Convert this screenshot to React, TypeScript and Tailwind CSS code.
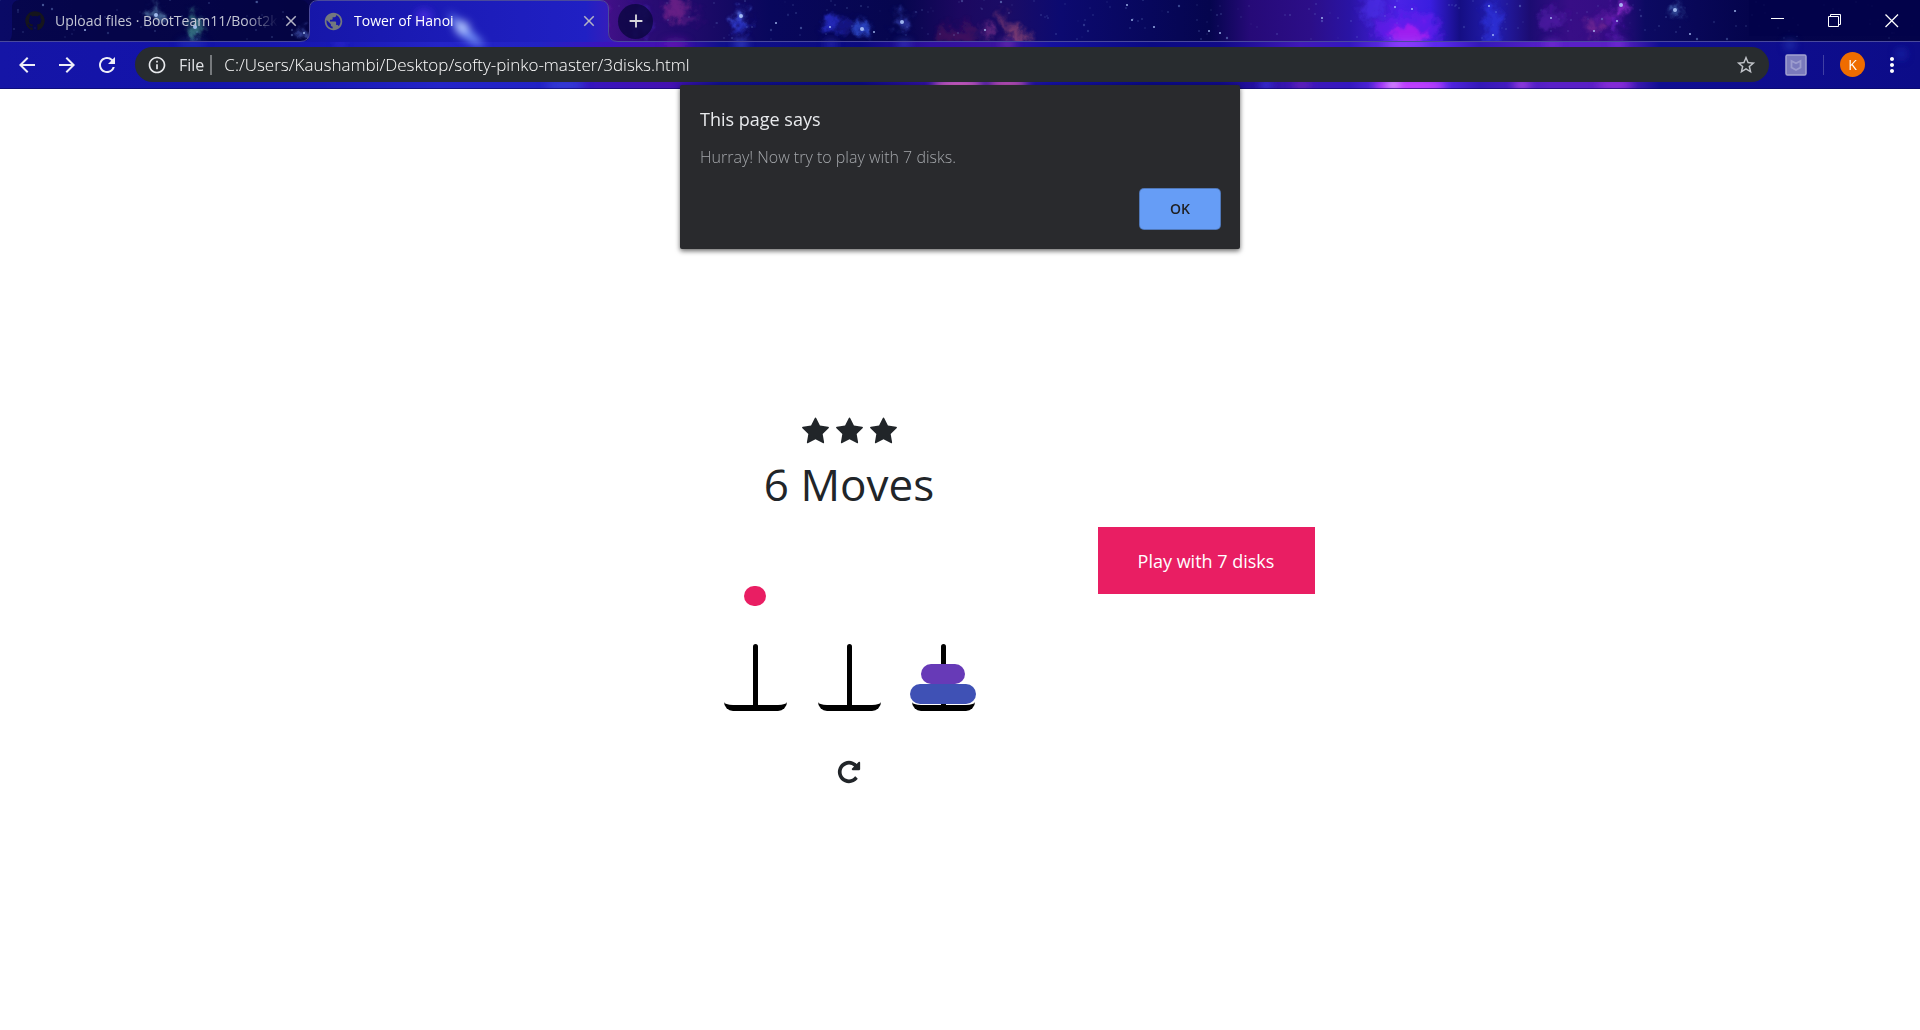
import React, { useState } from "react";
import {
  MdArrowBack,
  MdArrowForward,
  MdRefresh,
  MdInfoOutline,
  MdStarBorder,
  MdMoreVert,
  MdAdd,
  MdClose,
  MdPublic,
} from "react-icons/md";
import { FaGithub } from "react-icons/fa";

const STRIP_STOPS: [number, string][] = [
  [0, "#0a0a66"], [300, "#06064e"], [590, "#4a1290"], [650, "#2a0c74"], [710, "#1a0a66"], [770, "#08075c"],
  [900, "#06064e"], [960, "#1c0860"], [1010, "#1a0c66"], [1060, "#0c0a70"], [1150, "#07075c"], [1210, "#05054e"],
  [1250, "#260a78"], [1310, "#2c0e88"], [1350, "#2a14a4"], [1400, "#4a22e6"], [1430, "#3a1ee0"], [1460, "#150e84"],
  [1495, "#241eb0"], [1530, "#1c0c72"], [1570, "#380e86"], [1610, "#340d84"], [1645, "#0c0a62"], [1750, "#04044c"],
  [1920, "#03034a"],
];

const TOOLBAR_STOPS: [number, string][] = [
  [0, "#1515a6"], [200, "#1313aa"], [320, "#1818b4"], [440, "#2424c8"], [540, "#2222c4"], [600, "#3a14bc"],
  [670, "#4410b0"], [720, "#10108c"], [860, "#0a0a80"], [930, "#3010a0"], [1000, "#3a14a0"], [1050, "#1410a0"],
  [1150, "#0a0a84"], [1220, "#100a88"], [1300, "#4018b8"], [1350, "#3418c0"], [1400, "#7034f0"], [1440, "#5a28ec"],
  [1480, "#3418b8"], [1550, "#5a20c8"], [1620, "#5a20c4"], [1660, "#100e92"], [1920, "#0c0c88"],
];

/* x, y, rx, ry, colour, opacity */
type Cloud = [number, number, number, number, string, number];

const STRIP_CLOUDS: Cloud[] = [
  [155, 15, 5, 8, "#7db8d8", 0.6], [195, 27, 7, 11, "#54b4a4", 0.6], [303, 34, 4, 4, "#7090ff", 0.8],
  [600, 18, 7, 16, "#7a20b8", 0.5], [676, 8, 9, 16, "#a8329c", 0.5], [690, 18, 12, 5, "#8a2c9c", 0.35],
  [640, 22, 10, 16, "#4a2cd0", 0.4], [741, 22, 5, 14, "#3346e8", 0.8], [741, 16, 3, 3, "#8ab0ff", 0.9],
  [831, 25, 6, 9, "#2a34d8", 0.8], [862, 28, 6, 7, "#3a5ae8", 0.8], [846, 24, 12, 4, "#242ab8", 0.6],
  [902, 20, 7, 8, "#4050c8", 0.6], [955, 36, 22, 10, "#7a205c", 0.35], [986, 31, 3, 9, "#c850a8", 0.6],
  [1005, 20, 3, 9, "#c05878", 0.6], [1013, 30, 5, 6, "#c86078", 0.6], [1022, 36, 9, 4, "#d06878", 0.6],
  [1408, 30, 32, 18, "#6a20ee", 0.7], [1410, 36, 17, 10, "#b020f0", 0.8], [1371, 8, 10, 14, "#5030f0", 0.6],
  [1492, 26, 8, 22, "#3034e0", 0.7], [1552, 20, 12, 10, "#5a1cb0", 0.6], [1621, 6, 7, 6, "#a030d8", 0.8],
  [1610, 18, 12, 4, "#8a28c0", 0.6], [1617, 28, 3, 12, "#7a24d8", 0.8], [1594, 28, 8, 6, "#a83ca0", 0.5],
  [1676, 10, 4, 4, "#5a8ad0", 0.9],
];

const TOOLBAR_CLOUDS: Cloud[] = [
  [340, 43, 5, 4, "#4034e0", 0.7], [192, 44, 14, 4, "#3a56d0", 0.4],
  [676, 44, 12, 4, "#7a1cb0", 0.7], [741, 44, 7, 3, "#5060f0", 0.9], [831, 44, 6, 3, "#4040e0", 0.8],
  [904, 44, 7, 3, "#4050d8", 0.8], [1008, 44, 8, 3, "#9a40b8", 0.8], [1406, 44, 22, 4, "#9a40ff", 0.9],
  [1552, 44, 8, 3, "#8a34d8", 0.8], [1618, 44, 8, 3, "#8a34e0", 0.8], [958, 86, 26, 6, "#f070c8", 1],
  [1008, 85, 20, 6, "#e060b8", 0.9], [1266, 85, 6, 4, "#4040f0", 0.9],
  [1302, 85, 9, 4, "#7a24b8", 0.8], [1410, 86, 36, 7, "#c840ff", 1], [1393, 84, 5, 5, "#f0b0ff", 0.9],
  [1522, 85, 9, 5, "#b048e8", 0.9], [1615, 85, 18, 5, "#9a30e0", 0.9], [565, 85, 20, 5, "#3a4ae0", 0.8],
  [1790, 45, 5, 4, "#3050c8", 0.7], [1901, 54, 5, 5, "#2838c0", 0.6],
];

/* x, y, radius of the brighter stars */
const BRIGHT: [number, number, number][] = [
  [156, 15, 2], [195, 27, 2], [85, 30, 1], [741, 16, 2], [776, 23, 1], [862, 29, 2], [874, 32, 1], [830, 27, 1],
  [902, 22, 2], [985, 30, 1], [1154, 27, 1], [1209, 31, 1], [1132, 20, 1], [1127, 5, 1], [1220, 33, 1],
  [1489, 6, 1], [1493, 35, 1], [1551, 18, 1], [1594, 31, 1], [1617, 21, 1], [1621, 5, 2], [1675, 10, 2],
  [1735, 11, 1], [1690, 34, 1], [1395, 7, 1], [1412, 9, 1], [1322, 18, 1], [304, 33, 1],
];

const DUST = Array.from({ length: 300 }, (_, i) => ({
  x: (i * 379 + ((i * i * 17) % 211)) % 1920,
  y: (i * 23 + ((i * i * 7) % 37)) % 40,
  o: 0.1 + ((i * 13) % 10) / 25,
}));

function Clouds({ items, filter }: { items: Cloud[]; filter: string }) {
  return (
    <g filter={filter}>
      {items.map(([x, y, rx, ry, c, o], i) => (
        <ellipse key={i} cx={x} cy={y} rx={rx} ry={ry} fill={c} opacity={o} />
      ))}
    </g>
  );
}

function Galaxy() {
  return (
    <svg className="absolute inset-0 h-full w-full" viewBox="0 0 1920 89" preserveAspectRatio="xMinYMin slice" aria-hidden="true">
      <defs>
        <linearGradient id="strip">
          {STRIP_STOPS.map(([x, c]) => (
            <stop key={x} offset={x / 1920} stopColor={c} />
          ))}
        </linearGradient>
        <linearGradient id="bar">
          {TOOLBAR_STOPS.map(([x, c]) => (
            <stop key={x} offset={x / 1920} stopColor={c} />
          ))}
        </linearGradient>
        <linearGradient id="tab">
          <stop offset="0" stopColor="#1616a8" />
          <stop offset="0.5" stopColor="#1c1cb8" />
          <stop offset="0.9" stopColor="#2020c4" />
          <stop offset="1" stopColor="#3c1cb8" />
        </linearGradient>
        <filter id="soft" filterUnits="userSpaceOnUse" x="0" y="-30" width="1920" height="160">
          <feGaussianBlur stdDeviation="4" />
        </filter>
        <filter id="wisp" filterUnits="userSpaceOnUse" x="0" y="-30" width="1920" height="160">
          <feGaussianBlur stdDeviation="3" result="b" />
          <feTurbulence type="fractalNoise" baseFrequency="0.08" numOctaves="3" seed="4" result="n" />
          <feDisplacementMap in="b" in2="n" scale="22" xChannelSelector="R" yChannelSelector="G" />
        </filter>
        <clipPath id="top">
          <rect width="1920" height="41" />
        </clipPath>
      </defs>
      <rect width="1920" height="42" fill="url(#strip)" />
      <g clipPath="url(#top)">
        <path d="M8 42Q12 40 12 32V8Q12 0 20 0H300Q308 0 309 8V42Z" fill="#03033c" opacity="0.6" />
        <Clouds items={STRIP_CLOUDS} filter="url(#wisp)" />
        {DUST.map((d, i) => (
          <circle key={i} cx={d.x} cy={d.y} r={i % 9 === 0 ? 1.2 : 0.7} fill="#8fb0ee" opacity={d.o} />
        ))}
        {BRIGHT.map(([x, y, r], i) => (
          <circle key={i} cx={x} cy={y} r={r} fill="#b4ccff" opacity="0.85" />
        ))}
        <rect x="1749" width="171" height="36" fill="#03034a" opacity="0.8" />
      </g>
      <rect y="41" width="1920" height="48" fill="url(#bar)" />
      <Clouds items={TOOLBAR_CLOUDS} filter="url(#soft)" />
      <path d="M302 42Q310 41 310 33V8Q310 1 318 1H600Q608 1 608 9V33Q608 41 617 42Z" fill="url(#tab)" />
      <g filter="url(#soft)">
        <path d="M448 12L462 22L486 46L474 44L458 34Z" fill="#7c9cff" />
        <ellipse cx="424" cy="16" rx="8" ry="6" fill="#4a2ce0" />
        <ellipse cx="462" cy="27" rx="7" ry="6" fill="#b8ccff" />
      </g>
      <path
        d="M0 41.5H300Q309.500 41.500 309.500 32V9Q309.500 0.500 318 0.500H600Q608.500 0.500 608.500 9V32Q608.500 41.500 618 41.500H1920"
        fill="none"
        stroke="#4a4a9c"
      />
      <rect y="88" width="1920" height="1" fill="#0a0a60" opacity="0.6" />
    </svg>
  );
}

function Tab({ title, icon, active }: { title: string; icon: React.ReactNode; active?: boolean }) {
  return (
    <div className="flex h-full w-[298px] items-center pl-[15px] pr-2">
      {icon}
      <button
        type="button"
        role="tab"
        aria-selected={!!active}
        className={
          "ml-2.5 mr-1 min-w-0 flex-1 whitespace-nowrap text-left text-sm " +
          (active ? "text-white" : "mask-r-from-85% text-[#c4c6d4]")
        }
      >
        {title}
      </button>
      <button type="button" aria-label={"Close " + title} className="text-[#b4b4c4]">
        <MdClose size={18} />
      </button>
    </div>
  );
}

function WindowButtons() {
  return (
    <div className="ml-auto flex h-9 text-white">
      <button type="button" aria-label="Minimize" className="flex w-[57px] items-center justify-center">
        <svg width="14" height="14"><path d="M0 4.500H13" stroke="currentColor" /></svg>
      </button>
      <button type="button" aria-label="Restore" className="flex w-[57px] items-center justify-center">
        <svg width="14" height="14" fill="none" stroke="currentColor">
          <path d="M0.500 2.500H10.500V12.500H0.500ZM2.500 2.500V0.500H12.500V10.500H10.500" />
        </svg>
      </button>
      <button type="button" aria-label="Close" className="flex w-[57px] items-center justify-center">
        <svg width="14" height="14"><path d="M0.500 0.500L13 13M13 0.500L0.500 13" stroke="currentColor" strokeWidth="1.300" /></svg>
      </button>
    </div>
  );
}

function BrowserChrome() {
  return (
    <header className="relative h-[89px]">
      <Galaxy />
      <div className="relative flex h-full flex-col">
        <div className="flex h-[42px] items-center pl-[10px]" role="tablist">
          <Tab title="Upload files · BootTeam11/Boot2k" icon={<FaGithub size={20} className="text-[#15151c]" />} />
          <Tab active title="Tower of Hanoi" icon={<MdPublic size={21} className="text-[#74787e]" />} />
          <button
            type="button"
            aria-label="New tab"
            className="ml-3 flex size-[35px] items-center justify-center rounded-full bg-[#0a0640]/80 text-[#d8d8dc]"
          >
            <MdAdd size={22} />
          </button>
          <WindowButtons />
        </div>
        <div className="flex h-[45px] items-center pl-[15px] pr-4">
          <div className="flex w-[120px] gap-4 text-[#eeeef8]">
            <button type="button" aria-label="Back"><MdArrowBack size={24} /></button>
            <button type="button" aria-label="Forward"><MdArrowForward size={24} /></button>
            <button type="button" aria-label="Reload"><MdRefresh size={24} /></button>
          </div>
          <div className="flex h-[35px] flex-1 items-center rounded-full bg-[#282c2f] pl-3 pr-3">
            <MdInfoOutline size={20} className="text-[#e8eaed]" />
            <label htmlFor="url" className="ml-3 text-base text-[#e0e2e5]">File</label>
            <span className="ml-1.5 h-5 w-0.5 bg-[#777a7d]" />
            <input
              id="url"
              className="ml-3 min-w-0 flex-1 bg-transparent text-[17px] font-light text-white outline-none"
              defaultValue="C:/Users/Kaushambi/Desktop/softy-pinko-master/3disks.html"
            />
            <button type="button" aria-label="Bookmark" className="text-[#c0c3c8]"><MdStarBorder size={22} /></button>
          </div>
          <button type="button" aria-label="Extension" className="ml-4">
            <svg width="22" height="22" fill="none">
              <rect x="1" y="1" width="20" height="20" rx="1.500" fill="#7a7abc" stroke="#a2a2d0" strokeWidth="1.500" />
              <path d="M6.500 7V13.500L11 16L15.500 13.500V7L11 9.200Z" stroke="#9c9cce" strokeWidth="1.800" />
            </svg>
          </button>
          <span className="ml-4 h-5 w-px bg-[#4040a4]" />
          <button
            type="button"
            aria-label="Profile"
            className="ml-4 flex size-[25px] items-center justify-center rounded-full bg-[#ef6c00] text-sm text-white"
          >
            K
          </button>
          <button type="button" aria-label="Menu" className="ml-[15px] text-white"><MdMoreVert size={24} /></button>
        </div>
      </div>
    </header>
  );
}

const STAR =
  "M1728 647q0 22-26 48l-363 354 86 500q1 7 1 20 0 21-10.5 35.5t-30.5 14.5q-19 0-40-12l-449-236-449 236q-22 12-40 12-21 0-31.5-14.5t-10.5-35.5q0-6 2-20l86-500-364-354q-25-27-25-48 0-37 56-46l502-73 225-455q19-41 49-41t49 41l225 455 502 73q56 9 56 46z";
const REPEAT =
  "M1664 256v448q0 26-19 45t-45 19h-448q-42 0-59-40-17-39 14-69l138-138q-148-137-349-137-104 0-198.5 40.5t-163.5 109.5-109.5 163.5-40.5 198.5 40.5 198.5 109.5 163.5 163.5 109.5 198.5 40.5q119 0 225-52t179-147q7-10 23-12 15 0 25 9l137 138q9 8 9.5 20.5t-7.5 22.5q-109 132-264 204.5t-327 72.5q-156 0-298-61t-245-164-164-245-61-298 61-298 164-245 245-164 298-61q147 0 284.5 55.5t244.5 156.5l130-129q29-31 70-14 39 17 39 59z";

function Glyph({ d, size }: { d: string; size: number }) {
  return (
    <svg width={size} height={size} viewBox="0 0 1792 1792" fill="currentColor" aria-hidden="true">
      <path d={d} />
    </svg>
  );
}

/* One peg with its base; disks stack up from the base, a lifted disk hovers above. */
function Tower({ lifted, children }: { lifted?: React.ReactNode; children?: React.ReactNode }) {
  return (
    <button type="button" aria-label="Tower" className="flex w-[63px] flex-col items-center">
      <span className="flex h-[58px] items-start">{lifted}</span>
      <span className="relative flex h-[67px] w-full flex-col items-center">
        <span className="h-[62px] w-[5px] rounded-t-sm bg-black" />
        <span className="absolute inset-x-0 bottom-0 h-4 rounded-b-[9px] border-b-[6px] border-black" />
        <span className="absolute bottom-[7px] flex flex-col items-center">{children}</span>
      </span>
    </button>
  );
}

function Game() {
  return (
    <section className="flex w-[251px] flex-col items-center">
      <div className="flex gap-[5px]">
        <Glyph d={STAR} size={29} />
        <Glyph d={STAR} size={29} />
        <Glyph d={STAR} size={29} />
      </div>
      <h1 className="mt-2 whitespace-nowrap text-[44px] leading-[60px]">6 Moves</h1>
      <div className="mt-[72px] flex w-full justify-between">
        <Tower lifted={<span className="h-5 w-[22px] rounded-[10px] bg-[#e91e63]" />} />
        <Tower />
        <Tower>
          <span className="h-5 w-11 rounded-[10px] bg-[#673ab7]" />
          <span className="h-5 w-[66px] rounded-[10px] bg-[#3f51b5]" />
        </Tower>
      </div>
      <button type="button" aria-label="Restart" className="mt-12">
        <Glyph d={REPEAT} size={26} />
      </button>
    </section>
  );
}

function Alert({ onClose }: { onClose: () => void }) {
  return (
    <div
      role="alertdialog"
      aria-labelledby="alert-title"
      aria-describedby="alert-text"
      className="absolute left-1/2 top-[85px] flex w-[560px] -translate-x-1/2 flex-col rounded-xs bg-[#292a2d] p-5 shadow-[0_2px_5px_rgba(0,0,0,0.6)]"
    >
      <h2 id="alert-title" className="text-lg leading-7 text-[#e8eaed]">This page says</h2>
      <p id="alert-text" className="mt-3 text-base font-light leading-6 text-[#a4a7ab]">Hurray! Now try to play with 7 disks.</p>
      <button
        type="button"
        onClick={onClose}
        className="mt-5 h-10 w-20 self-end rounded bg-[#669df6] text-sm font-semibold text-[#202124] ring-1 ring-[#4f77b8]"
      >
        OK
      </button>
    </div>
  );
}

export default function App() {
  const [open, setOpen] = useState(true);
  return (
    <div className="relative min-h-screen bg-white font-['Open_Sans','Noto_Sans',sans-serif] text-[#212529]">
      <BrowserChrome />
      <main className="flex items-start justify-center gap-[123px] pl-[118px] pt-[328px]">
        <Game />
        <a
          href="#seven"
          className="mt-[110px] flex h-[67px] w-[217px] items-center justify-center bg-[#e91e63] text-lg text-white"
        >
          Play with 7 disks
        </a>
      </main>
      {open && <Alert onClose={() => setOpen(false)} />}
    </div>
  );
}
